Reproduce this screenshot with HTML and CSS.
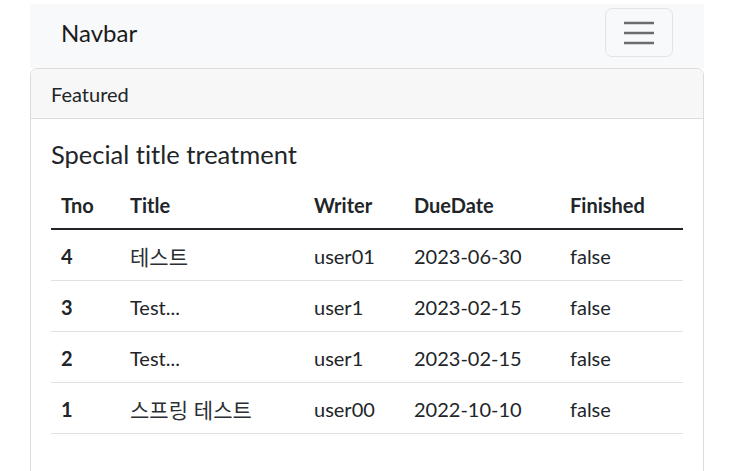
FILE: index.html
```html
<!DOCTYPE html>
<html lang="ko">
<head>
<meta charset="utf-8">
<title>Todo List</title>
<link rel="stylesheet" href="styles.css">
</head>
<body>
<div class="page">
  <nav class="navbar">
    <a class="brand" href="#">Navbar</a>
    <button class="toggler" type="button" aria-label="Toggle navigation">
      <svg class="toggler-icon" width="30" height="26" viewBox="0 0 30 26">
        <path d="M0 3H30M0 13H30M0 23H30" stroke="#6b6c6d" stroke-width="2.5" fill="none"/>
      </svg>
    </button>
  </nav>
  <div class="card">
    <div class="card-header">Featured</div>
    <div class="card-body">
      <h5 class="card-title">Special title treatment</h5>
      <table class="table">
        <colgroup>
          <col class="c-tno"><col class="c-title"><col class="c-writer"><col class="c-date"><col class="c-fin">
        </colgroup>
        <thead>
          <tr><th>Tno</th><th>Title</th><th>Writer</th><th>DueDate</th><th>Finished</th></tr>
        </thead>
        <tbody>
          <tr><th>4</th><td class="ko">테스트</td><td>user01</td><td>2023-06-30</td><td>false</td></tr>
          <tr><th>3</th><td>Test...</td><td>user1</td><td>2023-02-15</td><td>false</td></tr>
          <tr><th>2</th><td>Test...</td><td>user1</td><td>2023-02-15</td><td>false</td></tr>
          <tr><th>1</th><td class="ko">스프링 테스트</td><td>user00</td><td>2022-10-10</td><td>false</td></tr>
        </tbody>
      </table>
    </div>
  </div>
</div>
</body>
</html>
```

FILE: styles.css
```css
* { box-sizing: border-box; }
html, body { margin: 0; padding: 0; background: #fff; }
body {
  font-family: Lato, "Noto Sans CJK KR", sans-serif;
  font-size: 20px;
  line-height: 30px;
  color: #212529;
  font-variant-ligatures: none;
}
.page {
  width: 674px;
  margin: 4px 0 0 30px;
}
.navbar {
  height: 64px;
  background: #f8f9fa;
  display: flex;
  justify-content: space-between;
  align-items: flex-start;
  padding: 4px 31px 0 31px;
}
.brand {
  font-size: 24px;
  line-height: 49px;
  color: #1a1a1a;
  text-decoration: none;
}
.toggler {
  width: 68px;
  height: 49px;
  padding: 0;
  border: 1px solid #e3e4e5;
  border-radius: 7px;
  background: transparent;
  display: flex;
  align-items: center;
  justify-content: center;
}
.toggler-icon { display: block; }
.card {
  border: 1px solid #dcdcdc;
  border-radius: 7px;
  background: #fff;
}
.card-header {
  background: #f7f7f7;
  padding: 10px 20px 9px 20px;
  line-height: 30px;
  border-bottom: 1px solid #dcdcdc;
  border-radius: 6px 6px 0 0;
}
.card-body {
  padding: 20px 20px 60px 20px;
}
.card-title {
  font-size: 25.5px;
  font-weight: 400;
  line-height: 29px;
  margin: 1px 0 9px 0;
}
.table {
  width: 632px;
  border-collapse: collapse;
  table-layout: fixed;
}
.c-tno { width: 69px; }
.c-title { width: 184px; }
.c-writer { width: 100px; }
.c-date { width: 156px; }
.c-fin { width: 123px; }
.table th, .table td {
  padding: 11px 10px 9px 10px;
  text-align: left;
  line-height: 30px;
  border-bottom: 1px solid #dee2e6;
  white-space: nowrap;
}
.table th { font-weight: 700; }
.table thead th {
  padding-top: 12px;
  padding-bottom: 8px;
  border-bottom: 2px solid #212529;
}
.ko {
  font-family: "Noto Sans CJK KR", sans-serif;
  font-size: 21px;
  color: #2b2f33;
}
```
